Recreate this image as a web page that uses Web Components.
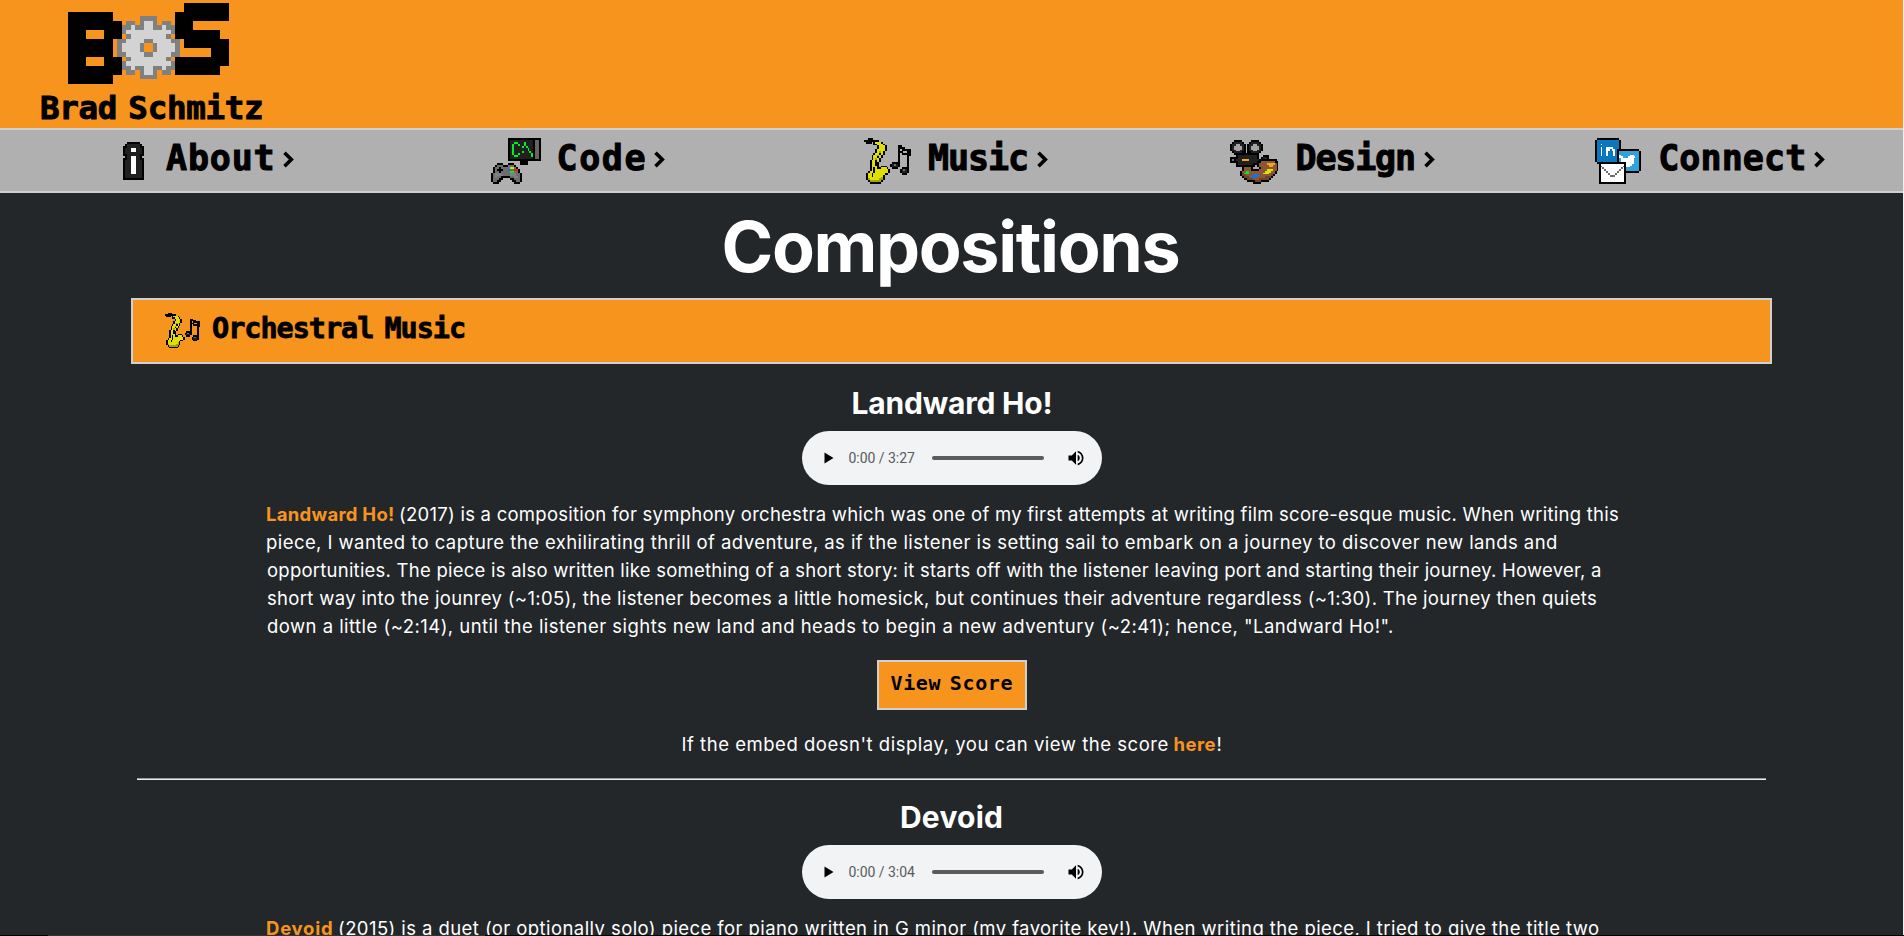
<!DOCTYPE html>
<html lang="en">
<head>
<meta charset="utf-8">
<title>Brad Schmitz - Compositions</title>
<style>
html,body{margin:0;height:936px;overflow:hidden;background:#23272a}
body{font-family:Inter,"Open Sans",sans-serif;color:#fff}
</style>
</head>
<body>
<site-page></site-page>
<script>
const COLORS={k:'#000',d:'#202020',g:'#808080',w:'#d3d3d3',s:'#a5a3a3',m:'#6b6362',n:'#00ee22',y:'#e0e000',Y:'#a4a400',r:'#e02020',b:'#1673e0',o:'#f9a51a',p:'#6e4229',P:'#8a5636',v:'#6d6d6d',L:'#0a78bf',T:'#2fa4dc',W:'#fff'};
const GEAR=['.....gggg.....','..gg.gwwg.gg..','.ggwggwwggwgg.','.gwwwwwwwwwwg.','..gwwwwwwwwg..','ggwwwwggwwwwgg','gwwwwg..gwwwwg'];
const gear=[...GEAR,...[...GEAR].reverse()];
function logo(){
  const g=Array.from({length:18},()=>Array(36).fill('.'));
  const f=(x,y,x2,y2,c)=>{for(let j=y;j<y2;j++)for(let i=x;i<x2;i++)g[j][i]=c};
  f(0,2,10,18,'k');f(10,4,12,8,'k');f(10,12,12,16,'k');f(4,6,8,8,'.');f(4,12,8,14,'.');
  f(26,0,36,4,'k');f(24,2,28,8,'k');f(26,6,34,10,'k');f(32,8,36,14,'k');f(24,12,34,16,'k');
  gear.forEach((r,j)=>[...r].forEach((c,i)=>{if(c!=='.')g[j+3][i+11]=c}));
  return g.map(r=>r.join(''));
}
const SPRITES={
logo:logo(),
info:['..kkkkkk..','.kddddddk.','kkddddddkk','kdddWWdddk','kdddWWdddk','kddddddddk','kkddddddkk','.kddWWddk.','kkddWWddkk','kdddWWdddk','kdddWWdddk','kdddWWdddk','kdddWWdddk','kdddWWdddk','kdddWWdddk','kdddWWdddk','kddddddddk','kddddddddk','kkkkkkkkkk'],
sax:[
'..kkk....................',
'kkkkkkkk.................',
'.kkk.kyyyk...............',
'.....kkyyyk..............',
'.......kyyyk......kk.....',
'.......kyyyk......kkkk...',
'......kyyyyk......k.kkkkk',
'......kyYyk.......kkk..kk',
'.....kyykyk.......k.kkkkk',
'....kyyYyk........k....kk',
'....kyykyk........k....k.',
'....kyYyk.........k....k.',
'...kyykyk.........k....k.',
'...kyykk.......kkkk....k.',
'...kyykk......kdvdk....k.',
'...kyyyk.kkk..kdddk....k.',
'...kykykkyyyk..kkk..kkkk.',
'...kykyyyyyyyk.....kdvdk.',
'..kyykyyyyyyyk.....kdddk.',
'.kyykyyyyyykk.......kkk..',
'.kyykyyyyyk..............',
'.kyyyyyyyYk..............',
'.kYyyyyyYYk..............',
'..kYYYYYYk...............',
'...kkkkkk................'],
code:['.........kkkkkkkkkkkkkkkkk',
...['dddddddddddd','ddnndddndddd','dnddnddndddd','dnddddndnddd','dndddddddndd','dndddddddndd','dnddddndddnd','dnddnddddddn','ddnndddddddn','dddddddddddd'].map(r=>'.........k'+r+'kmmk'),
'.........kkkkkkkkkkkkkkkkk',
'...............kkkk.......',
'...kkk...kkk...kkkk.......',
'..kvvvkkkvvvk.............',
'.kvvkvvvvvyyvk............',
'.kvkkkvvvbvvrrk...........',
'.kvvkvvvvvnnvvk...........',
'kvgggvvvvvgggvvk..........',
'kvggggvvvvgggvvk..........',
'kvgvvkkkkkvvggvk..........',
'kvvvkk....kkvvvk..........',
'kvvkk......kkvvk..........',
'.kkk........kkk...........'],
design:[
'..kkkk.....kkkk..........',
'.kddddk...kddddk.........',
'kddssddk.kddssddk........',
'kdssssdk.kdssssdk........',
'kdssssdk.kdssssdk........',
'kddssddk.kddssddk........',
'.kddddkk.kkddddk.........',
'..kkkkkkkkkkkkk..........',
'...kddddddddddk..kkk.....',
'kkkkddddddddddk.kddk.....',
'kvkdddoooodddddkkkkkkkkk.',
'kkkkddddddddddkkPPPPPPPkk',
'...kddddddddkkkPPPPooooPk',
'...kkkkkkkkkkskPPPPPooPPk',
'......kPPPPkssskPPPPPPPPk',
'......kPPPPkkkkPPPPyyyPPk',
'.....kPPnnPPPPPPPPyyyPPk.',
'.....kpnnnPPPPPPPyyyPPPk.',
'.....kppPPPPbbbPPPPPPpk..',
'......kpppPbbbPPPPpppk...',
'.......kkpppPPPpppppk....',
'.........kkkkpppkkkk.....',
'............kkkk.........'],
connect:[
'.kkkkkkkkkkkk............',
'kLLLLLLLLLLLLk...........',
'kLLLLLLLLLLLLk...........',
'kLLWLLLLLLLLLk...........',
'kLLLLLLLLLLLLk...........',
'kLLWLLWWWWLLLk...........',
'kLLWLLWWLWWLkkkkkkkkkkkk.',
'kLLWLLWLLLWLkTTTTTTTTTTTk',
'kLLWLLWLLLWLkTTTTTTTTTTTk',
'kLLWLLWLLLWLkWTTTTTWWTTTk',
'kLLLLLLLLLLLkWWTTTWWWWTTk',
'kLLLLLLLLLLLkTWWWWWWWTTTk',
'kLLLLLLLLLLLkTWWWWWWWTTTk',
'.kkkkkkkkkkkkkkkkWWWWTTTk',
'..kWWWWWWWWWWWWWkWWWTTTTk',
'..kvWWWWWWWWWWWvkWWTTTTTk',
'..kWvWWWWWWWWWvWkTTTTTTTk',
'..kWWvWWWWWWWvWWkTTTTTTTk',
'..kWWWvWWWWWvWWWkkkkkkkk.',
'..kWWWWvWWWvWWWWk........',
'..kWWWWWvvvWWWWWk........',
'..kWWWWWWWWWWWWWk........',
'..kWWWWWWWWWWWWWk........',
'..kWWWWWWWWWWWWWk........',
'..kkkkkkkkkkkkkkk........']
};

/* Draws one of the sprite maps as a grid of SVG rects. */
class PixelArt extends HTMLElement{
  connectedCallback(){
    const m=SPRITES[this.getAttribute('name')],w=Math.max(...m.map(r=>r.length)),h=m.length;
    let s='';
    m.forEach((r,y)=>{for(let x=0;x<r.length;){const c=r[x];let e=x;while(r[e]===c)e++;if(c!=='.')s+=`<rect x="${x}" y="${y}" width="${e-x}" height="1" fill="${COLORS[c]}"/>`;x=e}});
    this.attachShadow({mode:'open'}).innerHTML=`<style>:host{display:block;flex:none}svg{display:block;width:100%;height:100%}</style><svg viewBox="0 0 ${w} ${h}" preserveAspectRatio="none" shape-rendering="crispEdges">${s}</svg>`;
  }
}
customElements.define('pixel-art',PixelArt);

/* Text run tracked so that its ink spans exactly the given width; ws narrows the word gaps. */
class TrackedText extends HTMLElement{
  connectedCallback(){
    const w=+this.getAttribute('w'),ws=+this.getAttribute('ws')||0,t=this.textContent;
    this.attachShadow({mode:'open'}).innerHTML=`<style>:host{display:block;flex:none;white-space:pre;width:${w}px}</style><slot></slot>`;
    const c=getComputedStyle(this),x=TrackedText.ctx;
    x.font=`${c.fontWeight} ${c.fontSize} ${c.fontFamily}`;
    const m=x.measureText(t),gaps=t.split(' ').length-1;
    this.style.letterSpacing=((w-ws*gaps-m.actualBoundingBoxRight-m.actualBoundingBoxLeft)/(t.length-1))+'px';
    this.style.wordSpacing=ws+'px';
    this.style.textIndent=m.actualBoundingBoxLeft+'px';
  }
}
TrackedText.ctx=document.createElement('canvas').getContext('2d');
customElements.define('tracked-text',TrackedText);

const PIX='font-family:"DejaVu Sans Mono","Liberation Mono",monospace;font-weight:700;color:#000;';

class SiteHeader extends HTMLElement{
  connectedCallback(){
    this.attachShadow({mode:'open'}).innerHTML=`<style>
:host{display:block;box-sizing:border-box;height:128px;background:#f7941e;padding:3px 0 0 41px}
pixel-art{width:161px;height:80.5px;margin-left:27px}
tracked-text{${PIX}font-size:32.5px;line-height:40px;margin-top:4px;-webkit-text-stroke:1px #000}
</style><pixel-art name="logo"></pixel-art><tracked-text w="221" ws="-8">Brad Schmitz</tracked-text>`;
  }
}
customElements.define('site-header',SiteHeader);

class NavItem extends HTMLElement{
  connectedCallback(){
    const a=n=>this.getAttribute(n);
    this.attachShadow({mode:'open'}).innerHTML=`<style>
:host{display:flex;align-items:flex-start;padding-left:${a('pad')}px}
pixel-art{width:${a('iw')}px;height:${a('ih')}px;margin-top:${a('it')}px}
tracked-text{${PIX}font-size:35px;line-height:42px;margin:7px 0 0 ${a('gap')}px;-webkit-text-stroke:1px #000}
svg{margin:21px 0 0 10px;flex:none}
</style><pixel-art name="${a('icon')}"></pixel-art><tracked-text w="${a('w')}">${a('label')}</tracked-text><svg width="11" height="17" viewBox="0 0 11 17" fill="none" stroke="#000" stroke-width="3.6"><path d="M1.5 1.8 8.3 8.5 1.5 15.2"/></svg>`;
  }
}
customElements.define('nav-item',NavItem);

class SiteNav extends HTMLElement{
  connectedCallback(){
    this.attachShadow({mode:'open'}).innerHTML=`<style>
:host{display:grid;grid-template-columns:repeat(5,380.8px);box-sizing:border-box;height:65px;background:#b0b0b0;border:solid #d0d0d0;border-width:2px 0}
</style>
<nav-item pad="122.5" icon="info" iw="21" ih="38" it="12" gap="22.5" label="About" w="106.5"></nav-item>
<nav-item pad="110.2" icon="code" iw="50" ih="46" it="8" gap="17.5" label="Code" w="86"></nav-item>
<nav-item pad="102.4" icon="sax" iw="47" ih="46" it="8" gap="18" label="Music" w="98"></nav-item>
<nav-item pad="87.6" icon="design" iw="48.5" ih="44" it="10" gap="19" label="Design" w="116.5"></nav-item>
<nav-item pad="72" icon="connect" iw="46" ih="46" it="8" gap="19" label="Connect" w="144"></nav-item>`;
  }
}
customElements.define('site-nav',SiteNav);

class SectionBar extends HTMLElement{
  connectedCallback(){
    this.attachShadow({mode:'open'}).innerHTML=`<style>
:host{display:flex;align-items:flex-start;box-sizing:border-box;width:1641px;height:66px;margin:0 auto;background:#f7941e;border:2px solid #d0d0d0;padding-left:32px}
pixel-art{width:35px;height:35px;margin-top:13px}
tracked-text{${PIX}font-size:28.5px;line-height:34px;margin:12px 0 0 13px;-webkit-text-stroke:.8px #000}
</style><pixel-art name="sax"></pixel-art><tracked-text w="251" ws="-5">Orchestral Music</tracked-text>`;
  }
}
customElements.define('section-bar',SectionBar);

class AudioBar extends HTMLElement{
  connectedCallback(){
    this.attachShadow({mode:'open'}).innerHTML=`<style>
:host{display:flex;align-items:center;box-sizing:border-box;width:300px;height:54px;border-radius:27px;background:#f1f3f4;margin:0 auto;padding-left:22px}
svg{display:block;flex:none}
tracked-text{font:400 14px/16px Roboto,sans-serif;color:#5a5b5d;margin-left:15px}
i{display:block;width:111.5px;height:4px;border-radius:2px;background:#5b5b5b;margin-left:17px}
.v{margin-left:22px}
</style><svg width="10" height="12"><path d="M0.500 0.500V11.500L9.500 6Z"/></svg><tracked-text w="66.5">0:00 / ${this.getAttribute('time')}</tracked-text><i></i><svg class="v" width="20" height="20" viewBox="0 0 24 24"><path d="M3 9v6h4l5 5V4L7 9H3zm13.500 3c0-1.770-1.020-3.290-2.500-4.030v8.050c1.480-.73 2.500-2.250 2.500-4.020zM14 3.230v2.060c2.890.86 5 3.540 5 6.710s-2.110 5.850-5 6.710v2.060c4.010-.91 7-4.490 7-8.770s-2.990-7.860-7-8.770z"/></svg>`;
  }
}
customElements.define('audio-bar',AudioBar);

class MusicPiece extends HTMLElement{
  connectedCallback(){
    const a=n=>this.getAttribute(n);
    this.attachShadow({mode:'open'}).innerHTML=`<style>
:host{display:block}
h3{margin:0;font-size:30px;line-height:36px;font-weight:700}
h3 tracked-text{margin:0 auto}
audio-bar{margin-top:10px}
.text{margin:15px 0 0 267px;font-size:18.5px;line-height:28px}
</style><h3><tracked-text w="${a('w')}">${a('name')}</tracked-text></h3><audio-bar time="${a('time')}"></audio-bar><div class="text"><slot></slot></div>`;
  }
}
customElements.define('music-piece',MusicPiece);

class TextLine extends HTMLElement{
  connectedCallback(){
    this.attachShadow({mode:'open'}).innerHTML=`<style>
:host{display:flex}
::slotted(b){color:#f7941e;font-weight:700}
</style><slot></slot>`;
  }
}
customElements.define('text-line',TextLine);

class ScoreButton extends HTMLElement{
  connectedCallback(){
    this.attachShadow({mode:'open'}).innerHTML=`<style>
:host{display:block;box-sizing:border-box;width:150px;height:50px;margin:0 auto;background:#f7941e;border:2px solid #d0d0d0;padding:8px 0 0 12px}
tracked-text{${PIX}font-size:20px;line-height:26px}
</style><tracked-text w="122" ws="-4">View Score</tracked-text>`;
  }
}
customElements.define('score-button',ScoreButton);

class SitePage extends HTMLElement{
  connectedCallback(){
    this.attachShadow({mode:'open'}).innerHTML=`<style>
:host{display:block;position:relative;height:936px;overflow:hidden}
main{width:1903px}
h1{margin:0;padding-top:11px;font-size:70px;line-height:86px;font-weight:700}
h1 tracked-text{margin:0 auto}
section-bar{margin-top:8px}
.one{margin-top:21px}
score-button{margin-top:20px}
.embed{display:flex;margin:20px 0 0 682.5px;font-size:18.5px;line-height:28px}
b{color:#f7941e;font-weight:700}
.embed b tracked-text{margin-left:7px}
.embed .e{margin-left:1px}
hr{width:1629px;height:1px;border:0;border-top:1px solid #9a9a9a;background:#eee;margin:20px auto 0}
.two{margin-top:19px}
text-line b+tracked-text{margin-left:7px}
.edge{position:absolute;right:0;top:0;width:1px;height:100%;background:#efefef}
.status{position:absolute;left:0;bottom:0;width:100%;height:1px;background:linear-gradient(90deg,#000 48px,#333 48px,#333 485px,#000 485px)}
</style>
<site-header></site-header><site-nav></site-nav>
<main>
<h1><tracked-text w="454">Compositions</tracked-text></h1>
<section-bar></section-bar>
<music-piece class="one" name="Landward Ho!" w="198" time="3:27">
<text-line><b><tracked-text w="126">Landward Ho!</tracked-text></b><tracked-text w="1218">(2017) is a composition for symphony orchestra which was one of my first attempts at writing film score-esque music. When writing this</tracked-text></text-line>
<text-line><tracked-text w="1289">piece, I wanted to capture the exhilirating thrill of adventure, as if the listener is setting sail to embark on a journey to discover new lands and</tracked-text></text-line>
<text-line><tracked-text w="1333">opportunities. The piece is also written like something of a short story: it starts off with the listener leaving port and starting their journey. However, a</tracked-text></text-line>
<text-line><tracked-text w="1329">short way into the jounrey (~1:05), the listener becomes a little homesick, but continues their adventure regardless (~1:30). The journey then quiets</tracked-text></text-line>
<text-line><tracked-text w="1125">down a little (~2:14), until the listener sights new land and heads to begin a new adventury (~2:41); hence, "Landward Ho!".</tracked-text></text-line>
</music-piece>
<score-button></score-button>
<div class="embed"><tracked-text w="485">If the embed doesn't display, you can view the score</tracked-text><b><tracked-text w="41">here</tracked-text></b><span class="e">!</span></div>
<hr>
<music-piece class="two" name="Devoid" w="101" time="3:04">
<text-line><b><tracked-text w="65">Devoid</tracked-text></b><tracked-text w="1260">(2015) is a duet (or optionally solo) piece for piano written in G minor (my favorite key!). When writing the piece, I tried to give the title two</tracked-text></text-line>
</music-piece>
</main>
<div class="edge"></div><div class="status"></div>`;
  }
}
customElements.define('site-page',SitePage);
</script>
</body>
</html>
